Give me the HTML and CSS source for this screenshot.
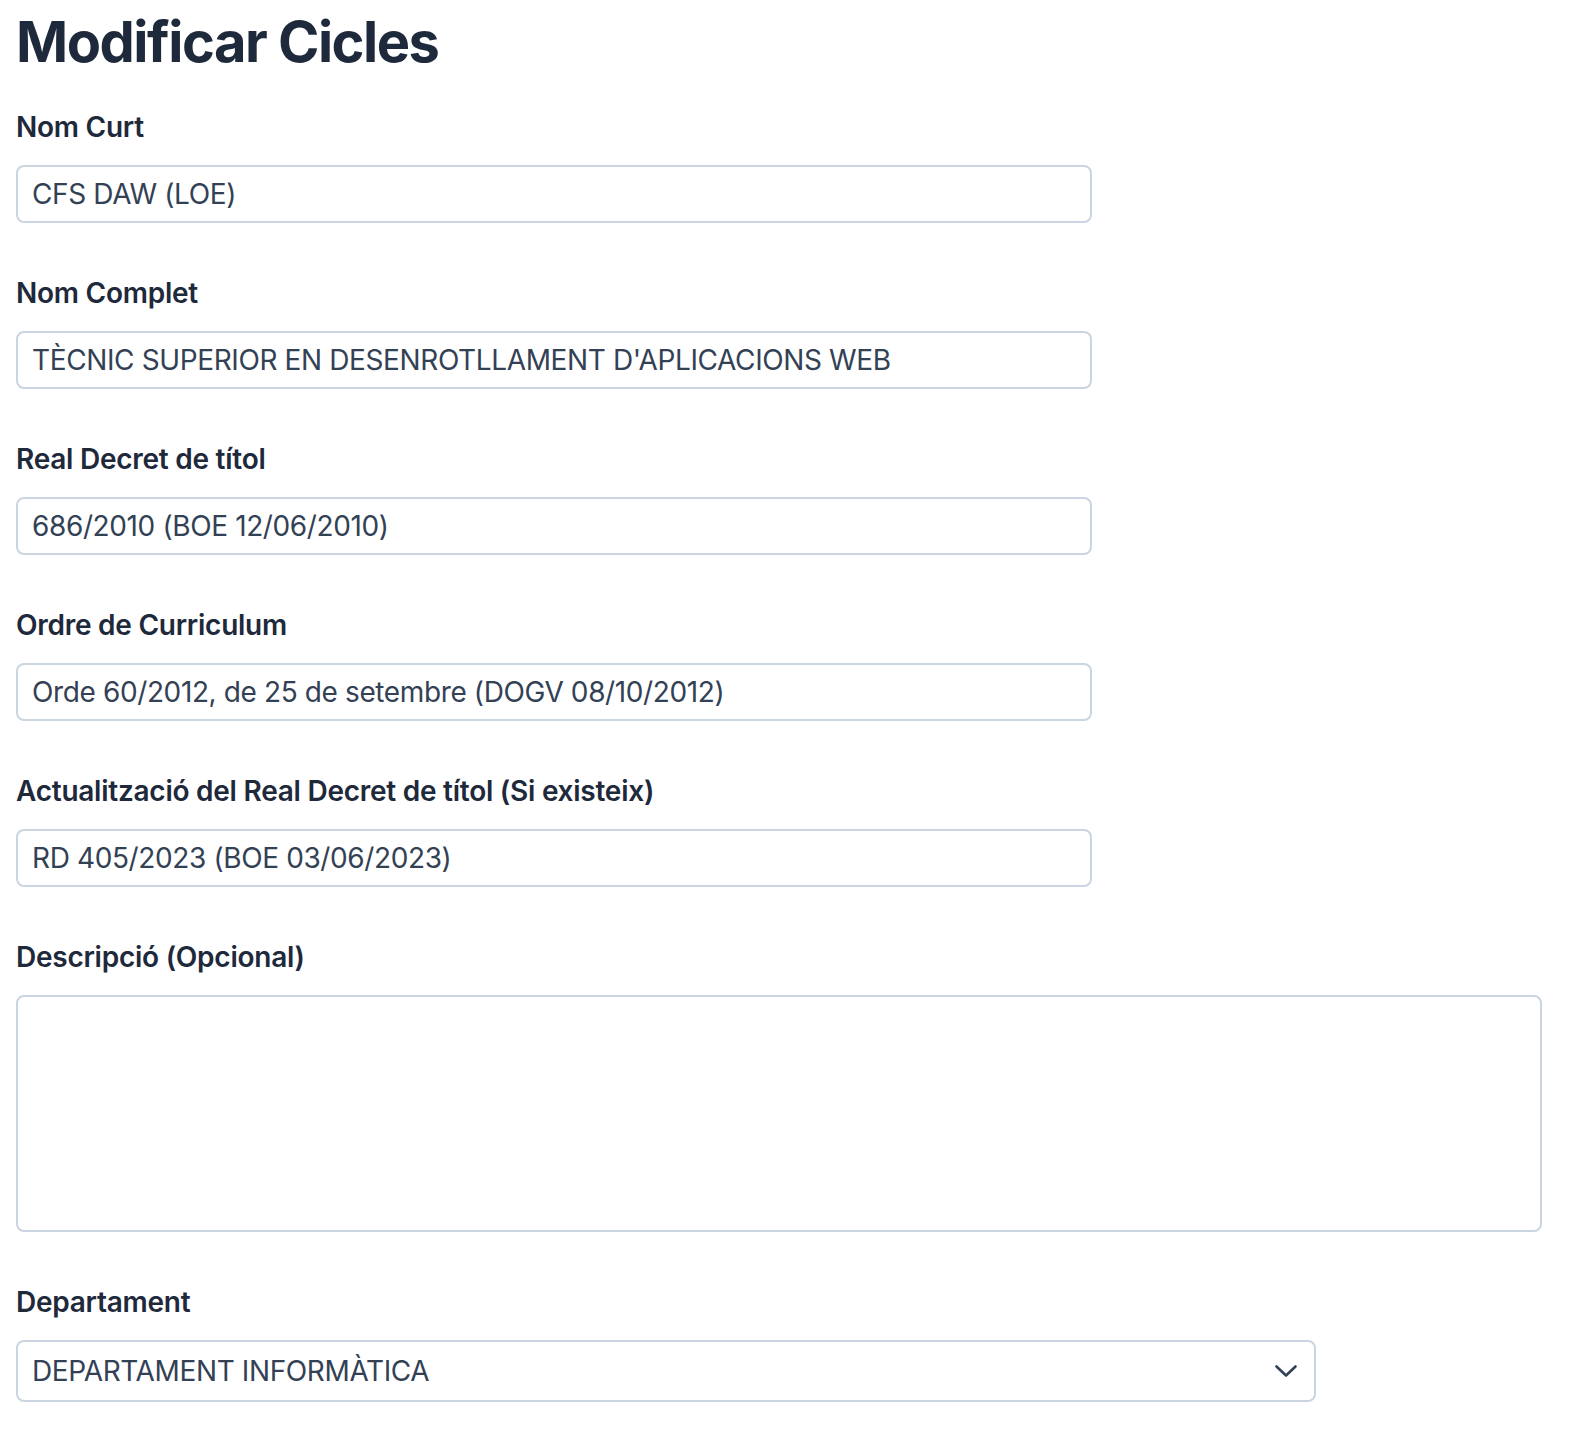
FILE: index.html
```html
<!DOCTYPE html>
<html lang="ca">
<head>
<meta charset="utf-8">
<title>Modificar Cicles</title>
<link rel="stylesheet" href="styles.css">
</head>
<body>
<main class="page">
  <h1 class="title">Modificar Cicles</h1>
  <form class="form">
    <div class="field">
      <label class="label" for="nom_curt">Nom Curt</label>
      <input class="input" id="nom_curt" type="text" value="CFS DAW (LOE)">
    </div>
    <div class="field">
      <label class="label" for="nom_complet">Nom Complet</label>
      <input class="input" id="nom_complet" type="text" value="TÈCNIC SUPERIOR EN DESENROTLLAMENT D'APLICACIONS WEB">
    </div>
    <div class="field">
      <label class="label" for="rd">Real Decret de títol</label>
      <input class="input" id="rd" type="text" value="686/2010 (BOE 12/06/2010)">
    </div>
    <div class="field">
      <label class="label" for="ordre">Ordre de Curriculum</label>
      <input class="input" id="ordre" type="text" value="Orde 60/2012, de 25 de setembre (DOGV 08/10/2012)">
    </div>
    <div class="field">
      <label class="label" for="act">Actualització del Real Decret de títol (Si existeix)</label>
      <input class="input" id="act" type="text" value="RD 405/2023 (BOE 03/06/2023)">
    </div>
    <div class="field field-area">
      <label class="label" for="desc">Descripció (Opcional)</label>
      <textarea class="textarea" id="desc"></textarea>
    </div>
    <div class="field">
      <label class="label" for="dep">Departament</label>
      <div class="select-wrap">
        <select class="select" id="dep">
          <option>DEPARTAMENT INFORMÀTICA</option>
        </select>
        <svg class="chevron" viewBox="0 0 24 24" width="24" height="24" aria-hidden="true">
          <path d="M2.5 7.5 L12 16.5 L21.5 7.5" fill="none" stroke="#334155" stroke-width="2.6" stroke-linecap="round" stroke-linejoin="round"/>
        </svg>
      </div>
    </div>
  </form>
</main>
</body>
</html>
```

FILE: styles.css
```css
* { box-sizing: border-box; }

html, body {
  margin: 0;
  padding: 0;
  background: #ffffff;
}

body {
  font-family: Inter, "Noto Sans", "Liberation Sans", sans-serif;
  color: #1e293b;
}

.page {
  padding: 10px 16px 0 16px;
}

.title {
  margin: 0 0 33px 0;
  font-size: 56px;
  line-height: 64px;
  font-weight: 700;
  color: #1e293b;
  letter-spacing: -1.5px;
}

.form {
  display: flex;
  flex-direction: column;
}

.field {
  display: flex;
  flex-direction: column;
  align-items: flex-start;
  margin-bottom: 50px;
}

.label {
  display: block;
  font-size: 28px;
  line-height: 40px;
  font-weight: 600;
  color: #1e293b;
  letter-spacing: -0.25px;
  margin-bottom: 18px;
}

.input,
.textarea,
.select {
  font-family: Inter, "Noto Sans", "Liberation Sans", sans-serif;
  font-size: 28px;
  line-height: 40px;
  color: #334155;
  letter-spacing: -0.38px;
  background: #ffffff;
  border: 2px solid #cbd5e1;
  border-radius: 8px;
  outline: none;
  margin: 0;
}

.input {
  width: 1076px;
  height: 58px;
  padding: 7px 14px;
}

.textarea {
  display: block;
  width: 1526px;
  height: 237px;
  padding: 7px 14px;
  resize: none;
}

.select-wrap {
  position: relative;
  width: 1300px;
}

.select {
  display: block;
  width: 100%;
  height: 62px;
  padding: 9px 60px 9px 14px;
  appearance: none;
  -webkit-appearance: none;
}

.chevron {
  position: absolute;
  right: 18px;
  top: 19px;
  pointer-events: none;
}
```
